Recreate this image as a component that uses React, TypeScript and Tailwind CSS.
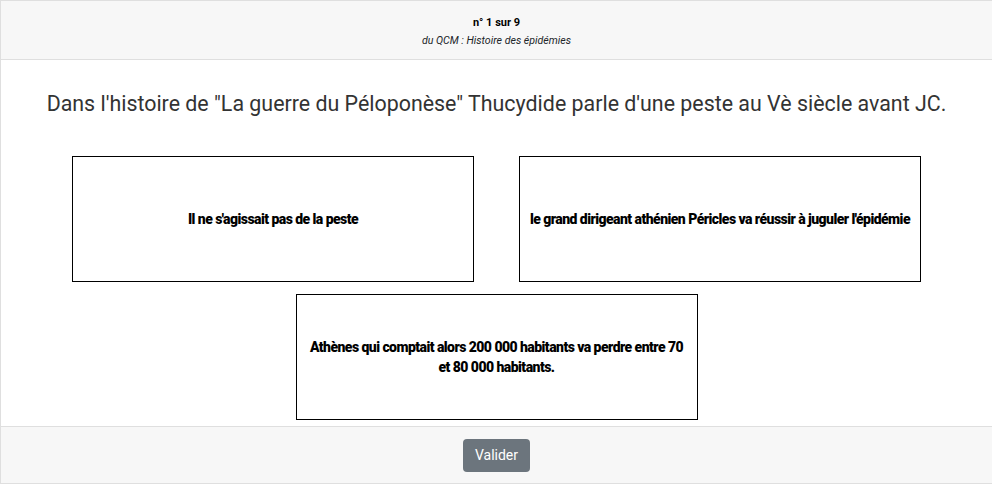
export default function App() {
  const options = [
    "Il ne s'agissait pas de la peste",
    "le grand dirigeant athénien Péricles va réussir à juguler l'épidémie",
    "Athènes qui comptait alors 200 000 habitants va perdre entre 70 et 80 000 habitants.",
  ];

  return (
    <div className="w-[993px] h-[484px] border border-[#dfdfdf] bg-white flex flex-col font-['Roboto',sans-serif] text-[#212529]">
      {/* header */}
      <div className="h-[59px] shrink-0 bg-[#f7f7f7] border-b border-[#dfdfdf] flex flex-col items-center pt-[15px]">
        <p className="text-[11px] font-bold leading-[14px] text-black">n° 1 sur 9</p>
        <p className="text-[10.6px] italic leading-[14px] mt-[4px]">du QCM : Histoire des épidémies</p>
      </div>

      {/* body */}
      <div className="flex-1 flex flex-col items-center">
        <h2 className="text-[21.4px] leading-[26px] mt-[31px] mb-[39px] text-[#333]">
          Dans l'histoire de "La guerre du Péloponèse" Thucydide parle d'une peste au Vè siècle avant JC.
        </h2>
        <div className="w-[860px] flex flex-wrap justify-center gap-x-[45px] gap-y-[12px]">
          {options.map((o) => (
            <div
              key={o}
              className="w-[402px] h-[126px] border border-black flex items-center justify-center px-[8px] text-center text-[14px] font-black leading-[20px] tracking-[-0.55px] text-black"
            >
              {o}
            </div>
          ))}
        </div>
      </div>

      {/* footer */}
      <div className="h-[57px] shrink-0 bg-[#f7f7f7] border-t border-[#dfdfdf] flex items-center justify-center">
        <button className="h-[33px] px-[12px] rounded-[4px] bg-[#6c757d] text-white text-[14px]">Valider</button>
      </div>
    </div>
  );
}
